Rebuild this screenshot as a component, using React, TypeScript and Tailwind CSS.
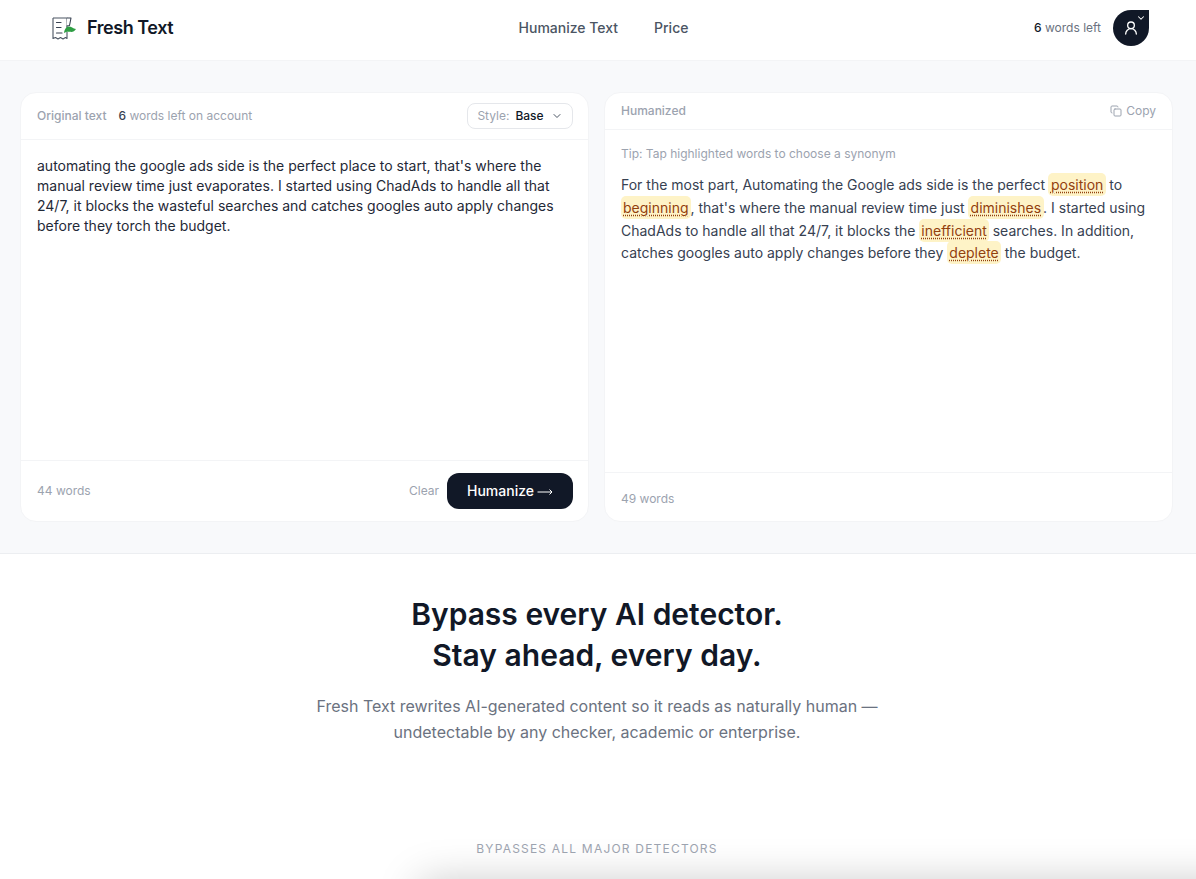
import { ChevronDown, Copy, UserRound } from "lucide-react";

function Logo() {
  return (
    <svg width="26" height="23" viewBox="0 0 26 23" fill="none" className="shrink-0">
      <path d="M2 1H16V13M2 1V21.5L4.5 20.5L7 22L9.5 20.5L12 22L14.5 20.5L16 21.5V15" stroke="#4b5563" strokeWidth="1.1" strokeLinejoin="round" />
      <path d="M5.5 5.5H10M5.5 10.5H10M5.5 16H11" stroke="#374151" strokeWidth="1.2" strokeLinecap="round" />
      <path d="M16 1L20 1L18.5 8.5L15.5 9" stroke="#374151" strokeWidth="1.1" strokeLinejoin="round" fill="#fff" />
      <path d="M13 16C13.5 12 15.5 9.5 18 9.5C20 9.5 22 11.5 25 12C23.5 14.5 21.5 15.2 19 14.8C16.5 14.4 15 14.8 13 16Z" fill="#2f9e44" />
    </svg>
  );
}

function Hl({ children }: { children: string }) {
  return (
    <span className="-mx-[0.5px] rounded-[5px] bg-[#fef3c7] px-[2.5px] py-[3px] text-[#92400e] underline decoration-dotted decoration-[#92400e] underline-offset-2">
      {children}
    </span>
  );
}

export default function App() {
  return (
    <div className="h-[879px] overflow-hidden bg-white font-['Inter',sans-serif] text-[#111827]">
      <header className="grid h-[61px] grid-cols-[1fr_auto_1fr] items-center border-b border-[#f3f4f6] bg-white pb-1 pl-[51px] pr-[47px]">
        <div className="flex items-center gap-[10px]">
          <Logo />
          <span className="text-[18px] font-semibold leading-7 tracking-tight text-[#111827]">Fresh Text</span>
        </div>
        <nav className="flex items-center gap-9 pl-[7px] text-sm font-medium text-[#4b5563]">
          <span>Humanize Text</span>
          <span>Price</span>
        </nav>
        <div className="flex items-center justify-end gap-3">
          <span className="text-xs text-[#6b7280]">
            <span className="font-medium text-[#111827]">6</span> words left
          </span>
          <div className="relative flex h-9 w-9 items-center justify-center rounded-full rounded-tr-[10px] bg-[#111827] text-white">
            <UserRound size={16} strokeWidth={2} />
            <ChevronDown size={10} strokeWidth={2.5} className="absolute right-[3px] top-[3px]" />
          </div>
        </div>
      </header>

      <main className="grid grid-cols-2 gap-[15px] border-b border-[#eceef1] bg-[#f8f9fb] pb-[31px] pl-5 pr-[23px] pt-[31px]">
        <section className="flex h-[430px] flex-col rounded-2xl border border-[#f3f4f6] bg-white">
          <div className="flex h-[47px] shrink-0 items-center justify-between border-b border-[#f3f4f6] pl-4 pr-[15px]">
            <div className="flex items-center gap-3 text-xs">
              <span className="font-medium text-[#9ca3af]">Original text</span>
              <span className="text-[#9ca3af]">
                <span className="font-medium text-[#374151]">6</span> words left on account
              </span>
            </div>
            <div className="flex h-[26px] w-[106px] items-center justify-center gap-[6px] rounded-lg border border-[#e5e7eb] text-xs">
              <span className="text-[#9ca3af]">Style:</span>
              <span className="font-medium text-[#111827]">Base</span>
              <ChevronDown size={12} className="ml-[1px] text-[#4b5563]" />
            </div>
          </div>
          <div className="flex-1 px-4 pt-4 text-sm leading-5 text-[#1f2937]">
            automating the google ads side is the perfect place to start, that's where the manual review time just evaporates. I started using ChadAds to handle all that 24/7, it blocks the wasteful searches and catches googles auto apply changes before they torch the budget.
          </div>
          <div className="flex h-[61px] shrink-0 items-center justify-between border-t border-[#f3f4f6] pl-4 pr-[15px]">
            <span className="text-xs text-[#9ca3af]">44 words</span>
            <div className="flex items-center gap-2">
              <span className="text-xs text-[#9ca3af]">Clear</span>
              <button className="flex h-9 w-[126px] items-center justify-center gap-[3px] rounded-xl bg-[#111827] text-sm font-medium text-white">
                Humanize
                <svg width="16" height="8" viewBox="0 0 16 8" fill="none" className="mt-[2px]">
                  <path d="M0.5 4H15M12.5 1.5L15 4L12.5 6.5" stroke="currentColor" strokeWidth="1" />
                </svg>
              </button>
            </div>
          </div>
        </section>

        <section className="flex h-[430px] flex-col rounded-2xl border border-[#f3f4f6] bg-white">
          <div className="flex h-[37px] shrink-0 items-center justify-between border-b border-[#f3f4f6] px-4">
            <span className="text-xs font-medium text-[#9ca3af]">Humanized</span>
            <span className="flex items-center gap-1 text-xs text-[#9ca3af]">
              <Copy size={12} /> Copy
            </span>
          </div>
          <div className="flex-1 px-4 pt-4">
            <p className="text-xs leading-4 text-[#9ca3af]">Tip: Tap highlighted words to choose a synonym</p>
            <p className="mt-3 text-sm leading-[22.75px] text-[#374151]">
              For the most part, Automating the Google ads side is the perfect <Hl>position</Hl> to <Hl>beginning</Hl>, that's where the manual review time just <Hl>diminishes</Hl>. I started using ChadAds to handle all that 24/7, it blocks the <Hl>inefficient</Hl> searches. In addition, catches googles auto apply changes before they <Hl>deplete</Hl> the budget.
            </p>
          </div>
          <div className="flex h-[49px] shrink-0 items-center border-t border-[#f3f4f6] px-4 pt-1">
            <span className="text-xs text-[#9ca3af]">49 words</span>
          </div>
        </section>
      </main>

      <section className="flex flex-col items-center pr-[2px] pt-10">
        <h1 className="text-center text-[30px] font-semibold leading-[41px] text-[#111827]">
          Bypass every AI detector.
          <br />
          Stay ahead, every day.
        </h1>
        <p className="mt-[17px] w-[600px] text-center text-base leading-[26px] text-[#6b7280]">
          Fresh Text rewrites AI-generated content so it reads as naturally human — undetectable by any checker, academic or enterprise.
        </p>
        <p className="mt-[96px] text-xs uppercase leading-4 tracking-[0.1em] text-[#9ca3af]">Bypasses all major detectors</p>
      </section>
      <div className="ml-[420px] mt-[25px] h-[200px] w-[900px] bg-white shadow-[0_0_40px_rgba(0,0,0,0.22)]" />
    </div>
  );
}
